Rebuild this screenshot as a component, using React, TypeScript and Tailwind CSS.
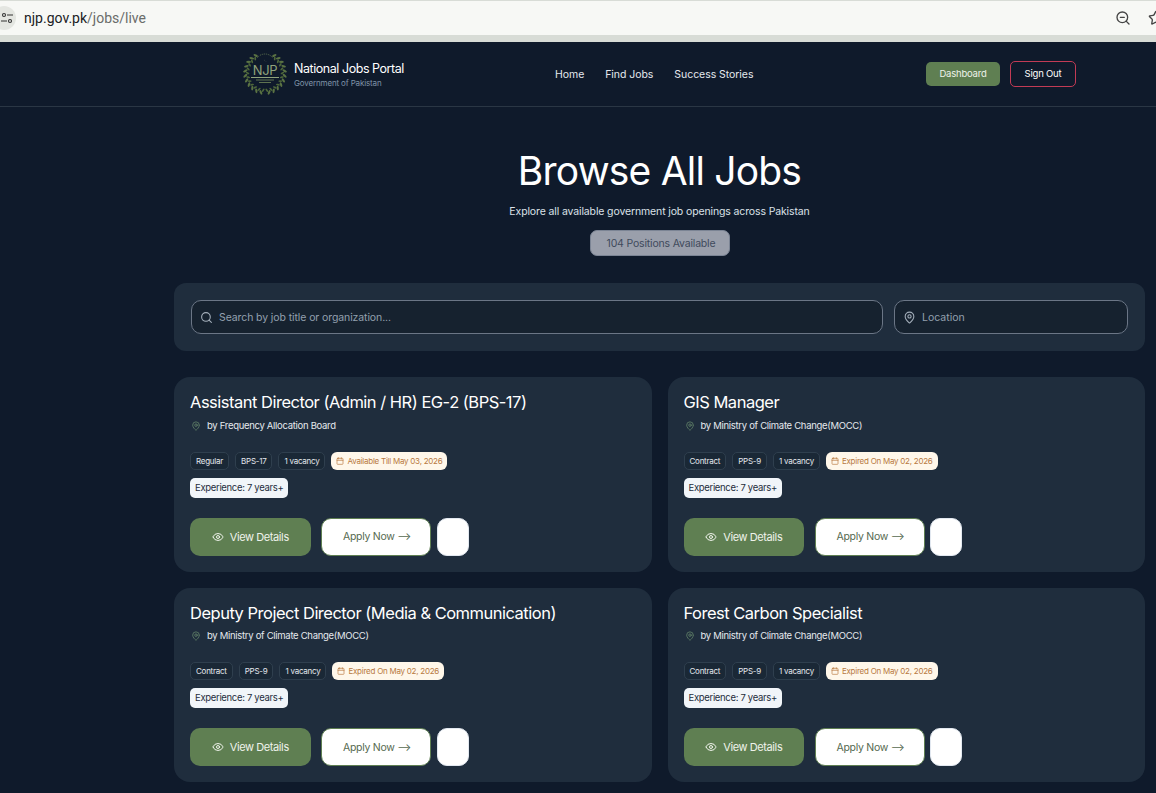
import { Calendar, Eye, MapPin, Search, Star, ZoomOut } from "lucide-react";

const jobs = [
  {
    title: "Assistant Director (Admin / HR) EG-2 (BPS-17)",
    org: "by Frequency Allocation Board",
    tags: ["Regular", "BPS-17", "1 vacancy"],
    deadline: "Available Till May 03, 2026",
  },
  {
    title: "GIS Manager",
    org: "by Ministry of Climate Change(MOCC)",
    tags: ["Contract", "PPS-9", "1 vacancy"],
    deadline: "Expired On May 02, 2026",
  },
  {
    title: "Deputy Project Director (Media & Communication)",
    org: "by Ministry of Climate Change(MOCC)",
    tags: ["Contract", "PPS-9", "1 vacancy"],
    deadline: "Expired On May 02, 2026",
  },
  {
    title: "Forest Carbon Specialist",
    org: "by Ministry of Climate Change(MOCC)",
    tags: ["Contract", "PPS-9", "1 vacancy"],
    deadline: "Expired On May 02, 2026",
  },
];

// wreath leaves, left and right side of the emblem
const leaves = Array.from({ length: 11 }, (_, i) => 28 + i * 14);

function Logo() {
  return (
    <svg width="44" height="44" viewBox="0 0 44 44" className="mb-[2px] shrink-0">
      {leaves.map((a) => (
        <g key={a}>
          <ellipse cx="22" cy="2.2" rx="1.1" ry="2.4" fill="#5a7243" transform={`rotate(${a} 22 22) rotate(35 22 2.2)`} />
          <ellipse cx="22" cy="2.2" rx="1.1" ry="2.4" fill="#5a7243" transform={`rotate(${-a} 22 22) rotate(-35 22 2.2)`} />
          <ellipse cx="22" cy="4.6" rx="0.9" ry="2" fill="#4d663a" transform={`rotate(${a + 6} 22 22) rotate(-30 22 4.6)`} />
          <ellipse cx="22" cy="4.6" rx="0.9" ry="2" fill="#4d663a" transform={`rotate(${-a - 6} 22 22) rotate(30 22 4.6)`} />
        </g>
      ))}
      <path d="M14 7a10 10 0 0 1 16 0" fill="none" stroke="#5f7350" strokeWidth="1" strokeDasharray="1 1" />
      <path d="M21 8a2.4 2.4 0 0 0 3 2.6a2.6 2.6 0 0 1-3-2.6z" fill="#8fa37c" />
      <text x="22" y="24" textAnchor="middle" fontSize="13" letterSpacing="-0.3" fill="#8fa37c" fontFamily="Inter, sans-serif">NJP</text>
      <rect x="8" y="26" width="28" height="1" fill="#8fa37c" />
      <rect x="13" y="28.5" width="18" height="1" fill="#5f7350" />
      <rect x="16" y="31" width="12" height="1" fill="#5f7350" />
    </svg>
  );
}

function JobCard({ job }: { job: (typeof jobs)[number] }) {
  return (
    <div className="h-[194.5px] rounded-2xl bg-[#1f2d3d] px-4 pt-[13px]">
      <h3 className="text-[16.5px] leading-[24px] tracking-[-0.5px] text-white">{job.title}</h3>
      <div className="mt-[3.75px] flex items-center gap-[6px] pl-px text-[9.5px] leading-[16px] tracking-[-0.3px] text-[#e5e9ee]">
        <MapPin className="h-[10px] w-[10px] text-[#5f7f68]" />
        <span>{job.org}</span>
      </div>
      <div className="mt-[18px] flex items-center gap-[6px]">
        {job.tags.map((t) => (
          <span
            key={t}
            className="flex h-[18px] items-center rounded-[5px] border border-[#2f3f4e] bg-[#1a2836] px-[5px] text-[8px] tracking-[-0.25px] text-[#e5e9ee]"
          >
            {t}
          </span>
        ))}
        <span className="flex h-[18px] items-center gap-[3px] rounded-[6px] bg-[#fff7ea] px-[5px] text-[8px] tracking-[-0.25px] text-[#b8793f]">
          <Calendar className="h-[8px] w-[8px]" />
          {job.deadline}
        </span>
      </div>
      <div className="mt-[8px] flex">
        <span className="flex h-[20px] items-center rounded-[5px] bg-[#f1f5f9] px-[5px] text-[9.5px] tracking-[-0.32px] text-[#1f2d3d]">
          Experience: 7 years+
        </span>
      </div>
      <div className="mt-[20px] flex items-center">
        <button className="flex h-[38px] w-[120.5px] items-center justify-center gap-[6px] rounded-[10px] bg-[#5f7f52] text-[11px] tracking-[-0.4px] text-[#eef2ea]">
          <Eye className="h-[12px] w-[12px]" />
          View Details
        </button>
        <button className="ml-[10.5px] h-[38px] w-[110px] rounded-[10px] border border-[#5f7f52] bg-white pt-px pl-[2px] text-[10.5px] tracking-[-0.3px] text-[#566a50]">
          Apply Now ⟶
        </button>
        <button className="ml-[5.75px] h-[38px] w-[32px] rounded-[10px] border border-[#e2e8f0] bg-white" />
      </div>
    </div>
  );
}

export default function App() {
  return (
    <div className="h-[793px] overflow-hidden bg-[#0f1a2b] font-['Inter',sans-serif]">
      {/* browser bar */}
      <div className="flex h-[42px] flex-col bg-[#d8dcd6]">
        <div className="mt-px flex h-[34px] items-center bg-[#f7f8f5]">
          <div className="-ml-[8px] flex h-[24px] w-[24px] items-center justify-center rounded-full bg-[#e4e6e1]">
            <svg width="12" height="12" viewBox="0 0 12 12" fill="none" stroke="#333" strokeWidth="1.1" className="ml-[6px]">
              <circle cx="3" cy="3" r="1.5" />
              <path d="M6 3h6M0 9h6" />
              <circle cx="9" cy="9" r="1.5" />
            </svg>
          </div>
          <span className="ml-[8px] font-['Roboto',sans-serif] text-[14px] text-[#202124]">
            njp.gov.pk<span className="text-[#6a6c6a]">/jobs/live</span>
          </span>
          <ZoomOut className="ml-auto h-[16px] w-[16px] text-[#444]" />
          <Star className="-mr-[8px] ml-[17px] h-[16px] w-[16px] text-[#444]" />
        </div>
      </div>

      {/* nav */}
      <div className="flex h-[65px] items-center border-b border-[#2a3644] pl-[243px]">
        <Logo />
        <div className="ml-[7px] w-[261px] pt-[2px]">
          <div className="text-[12.5px] leading-[16px] tracking-[-0.45px] text-white">National Jobs Portal</div>
          <div className="text-[8px] leading-[12px] tracking-[-0.15px] text-[#7f93a8]">Government of Pakistan</div>
        </div>
        <div className="flex items-center gap-[21px] pt-[2px] text-[10.5px] tracking-[-0.05px] text-[#e5e9ee]">
          <span>Home</span>
          <span>Find Jobs</span>
          <span>Success Stories</span>
        </div>
        <div className="ml-auto mr-[80px] flex items-center gap-[10px] text-[9.5px] tracking-[-0.2px]">
          <span className="flex h-[24px] w-[74px] items-center justify-center rounded-[5px] bg-[#5f7f52] text-[#eef2ea]">Dashboard</span>
          <span className="flex h-[26px] w-[66px] items-center justify-center rounded-[5px] border border-[#c23b55] text-white">Sign Out</span>
        </div>
      </div>

      {/* main */}
      <div className="ml-[174px] mr-[11px]">
        <div className="flex flex-col items-center pt-[40px]">
          <h1 className="text-[39px] leading-[48px] tracking-[-0.8px] text-white">Browse All Jobs</h1>
          <p className="mt-[9px] text-[10.5px] leading-[16px] tracking-[-0.13px] text-[#dbe1e8]">
            Explore all available government job openings across Pakistan
          </p>
          <span className="mt-[10px] flex h-[26px] w-[140px] items-center justify-center rounded-[7px] border border-[#7b8494] bg-[#9a9fab] pt-px pl-[3px] text-[10.5px] tracking-[-0.18px] text-[#3f4a5c]">
            104 Positions Available
          </span>
        </div>

        <div className="mt-[27px] flex h-[68px] items-center gap-[11px] rounded-xl bg-[#1f2d3d] px-[17px]">
          <div className="flex h-[34px] flex-1 items-center gap-[6px] rounded-[10px] border border-[#6b7686] bg-[#16222f] pl-[8px]">
            <Search className="h-[13px] w-[13px] text-[#a4afbb]" />
            <span className="pt-px text-[10.5px] tracking-[-0.1px] text-[#93a0ae]">Search by job title or organization...</span>
          </div>
          <div className="flex h-[34px] w-[234px] items-center gap-[6px] rounded-[10px] border border-[#6b7686] bg-[#16222f] pl-[8px]">
            <MapPin className="h-[13px] w-[13px] text-[#a4afbb]" />
            <span className="pt-px text-[10.5px] text-[#93a0ae]">Location</span>
          </div>
        </div>

        <div className="mt-[26px] grid grid-cols-2 gap-x-[16px] gap-y-[16px]">
          {jobs.map((j) => (
            <JobCard key={j.title} job={j} />
          ))}
        </div>
      </div>
    </div>
  );
}
